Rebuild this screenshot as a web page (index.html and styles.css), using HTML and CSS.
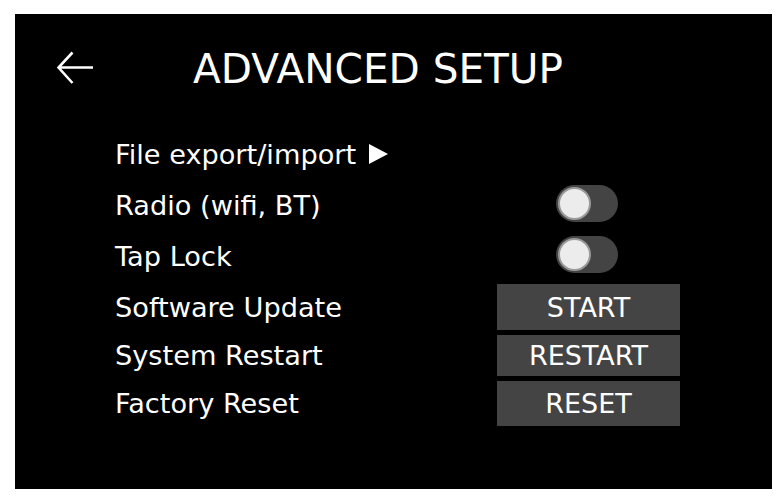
FILE: index.html
```html
<!DOCTYPE html>
<html>
<head>
<meta charset="utf-8">
<link rel="stylesheet" href="styles.css">
</head>
<body>
<div class="panel">
  <div class="header">
    <svg class="back" width="36" height="34" viewBox="0 0 36 34">
      <path d="M36 16.5 H1.5 M15.5 1.5 L1.5 16.5 L15.5 32" fill="none" stroke="#fff" stroke-width="2.6" stroke-linejoin="miter"/>
    </svg>
    <div class="title">ADVANCED SETUP</div>
  </div>
  <div class="list">
    <div class="label">File export/import<svg class="tri" width="19" height="20" viewBox="0 0 19 20"><path d="M0 0 L19 10 L0 20 Z" fill="#fff"/></svg></div>
    <div class="ctrl"></div>

    <div class="label">Radio (wifi, BT)</div>
    <div class="ctrl"><div class="toggle"><div class="knob"></div></div></div>

    <div class="label">Tap Lock</div>
    <div class="ctrl"><div class="toggle"><div class="knob"></div></div></div>

    <div class="label">Software Update</div>
    <div class="ctrl"><div class="btn">START</div></div>

    <div class="label">System Restart</div>
    <div class="ctrl"><div class="btn">RESTART</div></div>

    <div class="label">Factory Reset</div>
    <div class="ctrl"><div class="btn">RESET</div></div>
  </div>
</div>
</body>
</html>
```
FILE: styles.css
```css
html, body {
  margin: 0;
  padding: 0;
  background: #fff;
}
body {
  font-family: "DejaVu Sans", Verdana, sans-serif;
  color: #fff;
}
.panel {
  margin: 14px 0 0 15px;
  width: 757px;
  height: 475px;
  background: #000;
  overflow: hidden;
}
.header {
  height: 108px;
  display: flex;
  align-items: center;
  padding-left: 42px;
}
.back {
  display: block;
  flex: none;
}
.title {
  margin-left: 100px;
  font-size: 40.6px;
  line-height: 1;
  padding-top: 2px;
}
.list {
  margin-top: 9px;
  padding-left: 100px;
  display: grid;
  grid-template-columns: 382px 183px;
  grid-template-rows: 46px 46px 46px 46px 41px 45px;
  row-gap: 5px;
}
.label {
  display: flex;
  align-items: center;
  font-size: 27.2px;
  white-space: nowrap;
}
.tri {
  display: block;
  margin-left: 13px;
}
.ctrl {
  display: flex;
  align-items: center;
  justify-content: center;
}
.toggle {
  width: 62px;
  height: 37px;
  border-radius: 18.5px;
  background: #444;
  display: flex;
  align-items: center;
  padding-left: 2px;
  box-sizing: border-box;
  margin-right: 3px;
  margin-top: -3px;
}
.knob {
  width: 29px;
  height: 29px;
  border-radius: 50%;
  background: #ececec;
  border: 2px solid #9a9a9a;
}
.btn {
  width: 183px;
  height: 100%;
  background: #444;
  display: flex;
  align-items: center;
  justify-content: center;
  font-size: 27px;
}
```
